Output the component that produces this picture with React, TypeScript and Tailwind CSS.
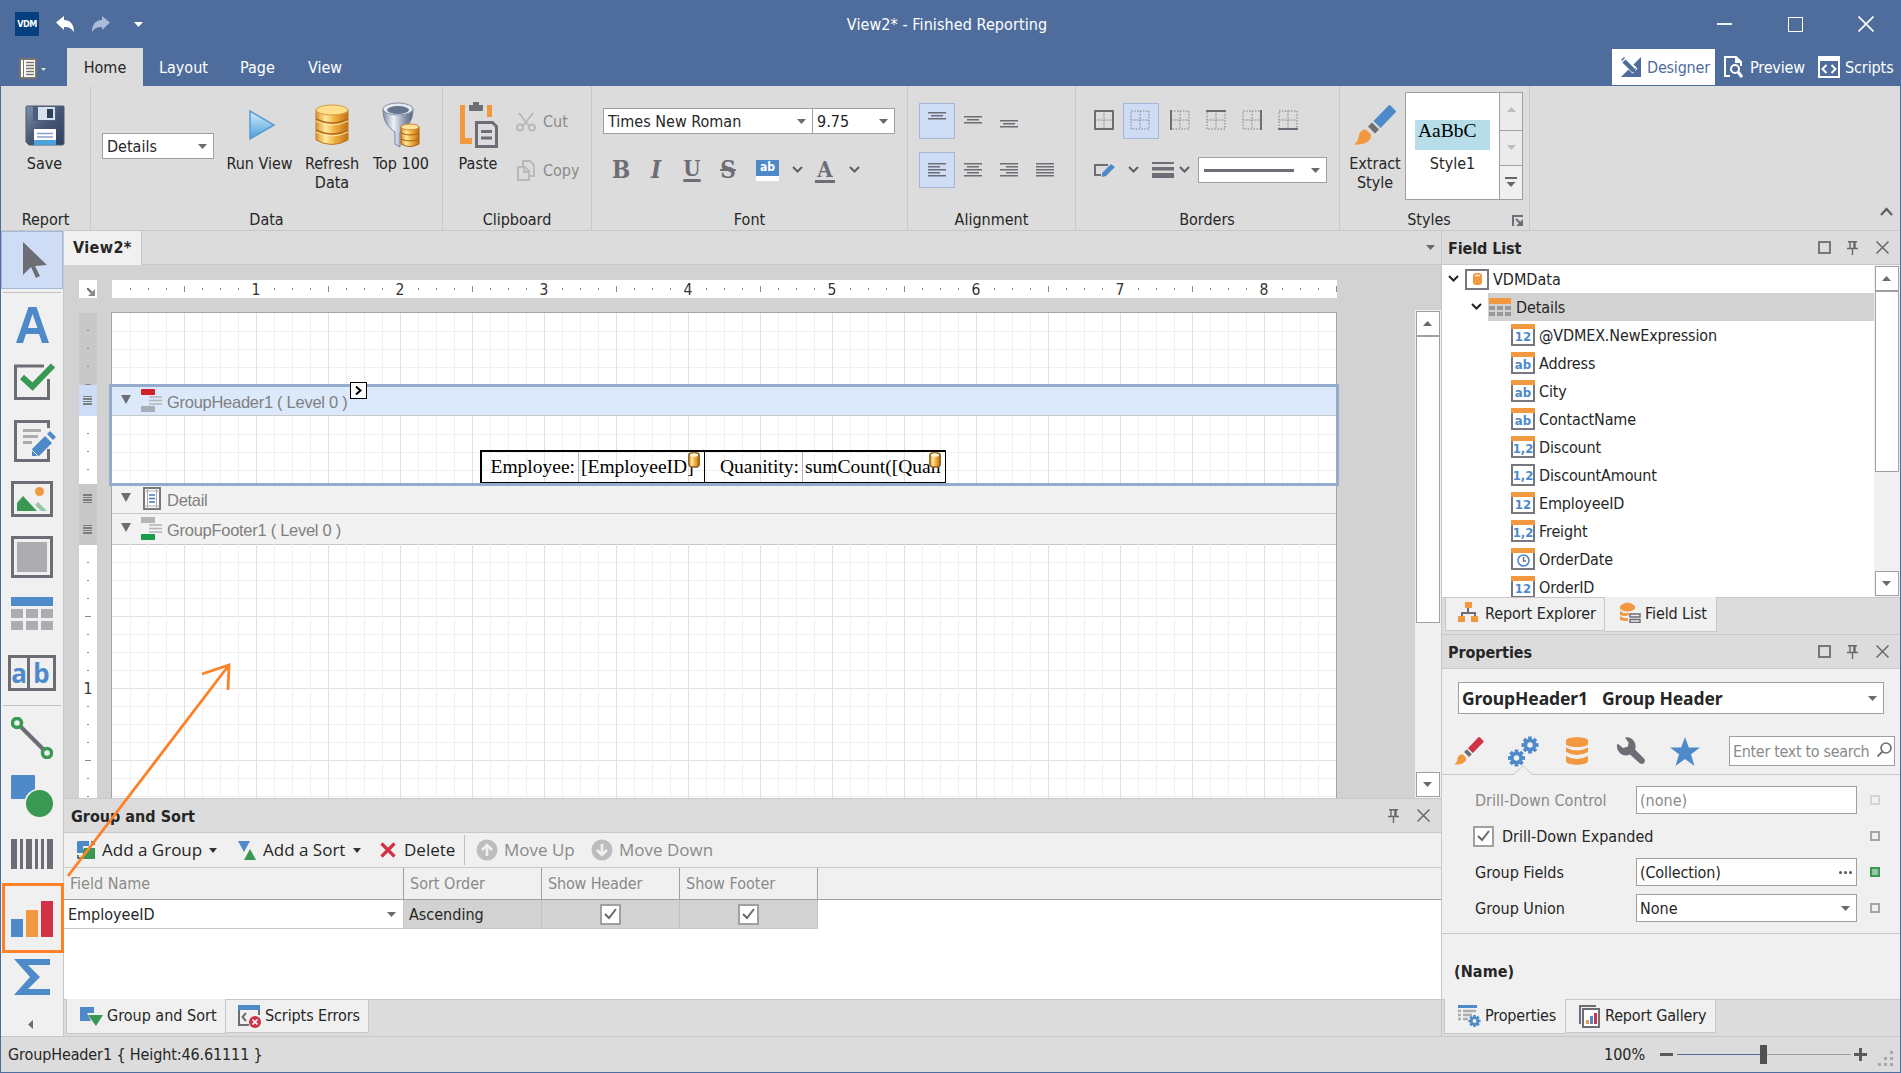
import React from 'react';
import clsx from 'clsx';

const BLUE = '#4e8ac9';
const ORANGE = '#f2983e';
const GREEN = '#399852';
const RED = '#d23245';
const INK = '#6d6d75';
const LIGHT = '#adacb1';

interface SvgProps {
  w: number;
  h: number;
  className?: string;
  children: React.ReactNode;
}

const Svg = ({ w, h, className, children }: SvgProps) => (
  <svg width={w} height={h} viewBox={`0 0 ${w} ${h}`} fill="none" className={clsx('block shrink-0', className)}>
    {children}
  </svg>
);

const Caret = ({ color = '#6a6a6a', className }: { color?: string; className?: string }) => (
  <Svg w={9} h={5} className={className}><path d="M0 0h9L4.500 5z" fill={color} /></Svg>
);

const CaretUp = ({ color = '#6a6a6a' }: { color?: string }) => (
  <Svg w={9} h={5}><path d="M0 5h9L4.500 0z" fill={color} /></Svg>
);

const Chevron = ({ className, color = '#5f5f63' }: { className?: string; color?: string }) => (
  <Svg w={11} h={8} className={className}><path d="M1 1l4.500 4.500L10 1" stroke={color} strokeWidth="2" /></Svg>
);

/* ---------- ribbon icons ---------- */

const SaveIcon = () => (
  <Svg w={40} h={41}>
    <defs>
      <linearGradient id="sv" x1="0" y1="0" x2="1" y2="1">
        <stop offset="0" stopColor="#7f91ad" /><stop offset=".5" stopColor="#465673" /><stop offset="1" stopColor="#2f4160" />
      </linearGradient>
    </defs>
    <path d="M2 1h36q1 0 1 1v36q0 2-2 2H4l-3-3V2q0-1 1-1z" fill="url(#sv)" stroke="#4a5870" />
    <rect x="8" y="1" width="23" height="15" fill="#4d5e7c" />
    <rect x="13" y="2" width="17" height="13" fill="#d9e1ec" />
    <rect x="22" y="4" width="6" height="9" fill="#2f3f5b" />
    <rect x="9" y="24" width="22" height="16" fill="#fff" />
    <rect x="9" y="35" width="22" height="5" fill="#4ba3dc" />
    <path d="M12 28.500h16M12 32h16" stroke="#8ba0c8" strokeWidth="1.500" />
  </Svg>
);

const RunIcon = () => (
  <Svg w={28} h={32}>
    <defs>
      <linearGradient id="rn" x1="0" y1="0" x2="0" y2="1">
        <stop offset="0" stopColor="#d6ecfa" /><stop offset="1" stopColor="#459fdc" />
      </linearGradient>
    </defs>
    <path d="M2 2l24 14L2 30z" fill="url(#rn)" stroke="#5b9bd0" strokeWidth="1.500" />
  </Svg>
);

const GoldDefs = () => (
  <defs>
    <linearGradient id="gold" x1="0" x2="1">
      <stop offset="0" stopColor="#e0952c" /><stop offset=".3" stopColor="#ffe9a0" /><stop offset=".6" stopColor="#f0ae3c" /><stop offset="1" stopColor="#c06f14" />
    </linearGradient>
    <linearGradient id="steel" x1="0" x2="1">
      <stop offset="0" stopColor="#7d8ba1" /><stop offset=".35" stopColor="#eef2f7" /><stop offset=".7" stopColor="#8d9ab0" /><stop offset="1" stopColor="#536280" />
    </linearGradient>
  </defs>
);

const DatabaseIcon = () => (
  <Svg w={36} h={42}>
    <GoldDefs />
    <path d="M2 6v30q16 9 32 0V6z" fill="url(#gold)" stroke="#c07a26" />
    <path d="M2 15q16 8 32 0M2 26q16 8 32 0" stroke="#b5691a" strokeWidth="1.500" />
    <path d="M2 17q16 8 32 0M2 28q16 8 32 0" stroke="#ffe7a6" />
    <ellipse cx="18" cy="6" rx="16" ry="5" fill="#ffdf8d" stroke="#d69a3f" />
  </Svg>
);

const FunnelIcon = () => (
  <Svg w={38} h={46}>
    <GoldDefs />
    <path d="M1 7c0 12 4 17 12 23v12l5 3V30c8-6 13-11 13-23z" fill="url(#steel)" stroke="#77849b" />
    <ellipse cx="16" cy="7" rx="15" ry="6" fill="#e6ebf2" stroke="#8491a6" />
    <ellipse cx="16" cy="8" rx="11" ry="4" fill="#65758f" />
    <path d="M19 25v17q9 5 18 0V25z" fill="url(#gold)" stroke="#a85f15" />
    <path d="M19 31q9 4 18 0M19 37q9 4 18 0" stroke="#a85f15" />
    <ellipse cx="28" cy="25" rx="9" ry="3" fill="#ffe39a" stroke="#c98529" />
  </Svg>
);

const PasteIcon = () => (
  <Svg w={40} h={46}>
    <path d="M6 3H1v39h12v-6H6zM28 3h5v12h-5z" fill={ORANGE} />
    <path d="M10 3h4V0h6v3h4v5q0 1-1 1H11q-1 0-1-1z" fill={INK} />
    <path d="M17.500 20.500h16l4 4v20h-20z" stroke={INK} strokeWidth="3" />
    <path d="M22 29.500h11M22 36h11" stroke={INK} strokeWidth="3" />
  </Svg>
);

const CutIcon = () => (
  <Svg w={20} h={20}>
    <g stroke="#b9b9bb" strokeWidth="2">
      <path d="M3 1l10 13M17 1L7 14" /><circle cx="4" cy="15.500" r="3" /><circle cx="16" cy="15.500" r="3" />
    </g>
  </Svg>
);

const CopyIcon = () => (
  <Svg w={19} h={22}>
    <g stroke="#b9b9bb" strokeWidth="2">
      <path d="M6 6V1h7l4 4v11h-4" /><path d="M1 7h7l4 4v9H1z" /><path d="M7 7v5h5" />
    </g>
  </Svg>
);

const Lines = ({ rows }: { rows: number[][] }) => (
  <Svg w={18} h={18}>
    {rows.map(([x, y, len], i) => <rect key={i} x={x} y={y} width={len} height="1.500" fill={INK} />)}
  </Svg>
);

const V_ALIGN = [
  [[0, 2, 18], [3, 5, 12], [0, 8, 18]],
  [[0, 6, 18], [3, 9, 12], [0, 12, 18]],
  [[0, 10, 18], [3, 13, 12], [0, 16, 18]],
];

const H_ALIGN = [
  [[0, 2, 18], [0, 5, 12], [0, 8, 18], [0, 11, 12], [0, 14, 18]],
  [[0, 2, 18], [3, 5, 12], [0, 8, 18], [3, 11, 12], [0, 14, 18]],
  [[0, 2, 18], [6, 5, 12], [0, 8, 18], [6, 11, 12], [0, 14, 18]],
  [[0, 2, 18], [0, 5, 18], [0, 8, 18], [0, 11, 18], [0, 14, 18]],
];

const BORDER_EDGES = ['M1 1h18v18H1z', '', 'M1 0v20', 'M0 1h20', 'M19 0v20', 'M0 19h20'];

const BorderIcon = ({ edge }: { edge: string }) => (
  <Svg w={20} h={20}>
    <path d="M1 1h18v18H1zM10 1v18M1 10h18" stroke="#8d8d93" strokeWidth="1.500" strokeDasharray="1.500 1.500" opacity=".8" />
    {edge && <path d={edge} stroke={INK} strokeWidth="2" />}
  </Svg>
);

const BrushIcon = ({ w, h, tip }: { w: number; h: number; tip: string }) => (
  <svg width={w} height={h} viewBox="0 0 42 40" className="block shrink-0">
    <path d="M34.500 0.500q1-1 2 0l5 5q1 1 0 2L26.500 23l-7-7z" fill={tip} />
    <path d="M18 17.500l7 7-4 4-7-7z" fill={INK} />
    <path d="M0 39.500c6-4 3-9 7-13 2-2 4-2 5-2l5 5c0 2 0 4-2 6-4 4-9 4-15 4z" fill={ORANGE} />
  </svg>
);

/* ---------- toolbox icons ---------- */

const CheckTool = () => (
  <Svg w={42} h={38}>
    <path d="M30 3H1.500v32.500h33V16" stroke={INK} strokeWidth="3" />
    <path d="M7 14l11 10L38 3" stroke="#f0f0f0" strokeWidth="10" />
    <path d="M8 14l10.500 9.500L39 2.500" stroke={GREEN} strokeWidth="6" />
  </Svg>
);

const RichTextTool = () => (
  <Svg w={42} h={43}>
    <path d="M34.500 8V1.500h-33v39h33V29" stroke={INK} strokeWidth="3" />
    <path d="M9 10.500h18M9 16.500h15M9 22.500h9" stroke={LIGHT} strokeWidth="3" />
    <path d="M18 36v-7l13-13 7 7-13 13z" fill={BLUE} />
    <path d="M33 14l3-3 6 6-3 3z" fill={BLUE} />
    <path d="M18 30l6 6" stroke="#f0f0f0" />
  </Svg>
);

const PictureTool = () => (
  <Svg w={42} h={36}>
    <rect x="1.500" y="1.500" width="39" height="33" stroke={INK} strokeWidth="3" />
    <circle cx="28.500" cy="10.500" r="4.500" fill={ORANGE} />
    <path d="M6 30v-8l6-7 14 15z" fill={GREEN} />
    <path d="M24 24l3-3 9 9h-6z" fill="#98c7a5" />
  </Svg>
);

const TableTool = () => (
  <Svg w={42} h={33}>
    <rect width="42" height="9" fill={BLUE} />
    {[0, 15, 30].map(x => [12, 24].map(y => <rect key={`${x}-${y}`} x={x} y={y} width="12" height="9" fill={LIGHT} />))}
  </Svg>
);

const ShapeTool = () => (
  <Svg w={42} h={43}>
    <path d="M1 0h22q1 0 1 1v13q-8 3-10 10H1q-1 0-1-1V1q0-1 1-1z" fill={BLUE} />
    <circle cx="28.500" cy="28.500" r="13.500" fill={GREEN} />
  </Svg>
);

const LineTool = () => (
  <Svg w={42} h={42}>
    <path d="M9 9l24 24" stroke={INK} strokeWidth="4" />
    <circle cx="6" cy="6" r="4.500" stroke={GREEN} strokeWidth="3.500" />
    <circle cx="36" cy="36" r="4.500" stroke={GREEN} strokeWidth="3.500" />
  </Svg>
);

const BarcodeTool = () => (
  <Svg w={42} h={30}>
    <path d="M0 0h6v30H0zM9 0h3v30H9zM15 0h6v30h-6zM24 0h3v30h-3zM30 0h3v30h-3zM36 0h6v30h-6z" fill={INK} />
  </Svg>
);

const ChartTool = () => (
  <Svg w={42} h={36}>
    <path d="M0 18h12v18H0z" fill={BLUE} /><path d="M15 9h12v27H15z" fill={ORANGE} /><path d="M30 0h12v36H30z" fill={RED} />
  </Svg>
);

const SigmaTool = () => (
  <Svg w={36} h={36}>
    <path d="M0 0h36v6H14l12 12-12 12h22v6H0l16-18z" fill={BLUE} />
  </Svg>
);

/* ---------- small chrome ---------- */

const PinIcon = () => (
  <Svg w={11} h={14}><path d="M1 .8h9M3 1v6M8 1v6M7 1v6M0 7.500h11M5.500 8v6" stroke="#68686c" strokeWidth="1.400" /></Svg>
);

const CloseIcon = () => (
  <Svg w={13} h={13}><path d="M.5.5l12 12M12.500.5l-12 12" stroke="#68686c" strokeWidth="1.500" /></Svg>
);

const PanelTitle = ({ title, max, className }: { title: string; max?: boolean; className?: string }) => (
  <div className={clsx('flex h-[33px] shrink-0 items-center bg-[#dcdcdc] pr-[11px]', className ?? 'pl-1.5')}>
    <span className="pt-0.5 font-bold">{title}</span>
    <div className="ml-auto flex items-center">
      {max && <div className="mr-4 size-[13px] border-2 border-[#77777b]" />}
      <PinIcon />
      <div className="ml-[18px]"><CloseIcon /></div>
    </div>
  </div>
);

const Combo = ({ className, children, caret = true }: { className?: string; children?: React.ReactNode; caret?: boolean }) => (
  <div className={clsx('flex shrink-0 items-center border border-[#a0a0a0] bg-white pl-1', className)}>
    {children}
    {caret && <Caret className="ml-auto mr-1.5" />}
  </div>
);

const Check = () => (
  <div className="flex size-[21px] items-center justify-center border-2 border-[#a0a0a0] bg-white">
    <Svg w={13} h={12}><path d="M1 6l4 4 7-9" stroke="#68686c" strokeWidth="2" /></Svg>
  </div>
);

const ScrollButton = ({ up }: { up?: boolean }) => (
  <div className="flex h-[25px] w-6 shrink-0 items-center justify-center border border-[#a0a0a0] bg-white pr-px">
    {up ? <CaretUp /> : <Caret />}
  </div>
);

/* ---------- ribbon ---------- */

interface GroupProps {
  label: string;
  className: string;
  labelClass?: string;
  children: React.ReactNode;
  extra?: React.ReactNode;
}

const Group = ({ label, className, labelClass, children, extra }: GroupProps) => (
  <div className={clsx('relative flex h-full shrink-0 flex-col border-r border-[#c8c8c8]', className)}>
    <div className="h-[122px] shrink-0">{children}</div>
    <div className={clsx('text-center leading-6', labelClass)}>{label}</div>
    {extra}
  </div>
);

const BigButton = ({ icon, label, className }: { icon: React.ReactNode; label: string; className?: string }) => (
  <div className={clsx('flex shrink-0 flex-col items-center text-center leading-[19px]', className)}>
    <div className="flex h-[68px] items-center pt-2.5">{icon}</div>
    <span className="whitespace-pre">{label}</span>
  </div>
);

const Toggle = ({ on, className, children }: { on?: boolean; className?: string; children: React.ReactNode }) => (
  <div className={clsx('flex size-9 items-center justify-center border', on ? 'border-[#a5b6d6] bg-[#cfdcf5]' : 'border-transparent', className)}>
    {children}
  </div>
);

const glyph = 'font-["DejaVu_Serif"] font-bold leading-none text-[#6d6d75] text-center';

const Ribbon = () => (
  <div className="flex h-[145px] shrink-0 border-b border-[#c8c8c8]">
    <Group label="Report" className="w-[90px]">
      <BigButton className="w-[87px]" icon={<SaveIcon />} label="Save" />
    </Group>
    <Group label="Data" className="w-[352px]">
      <div className="flex">
        <Combo className="ml-[11px] mt-[47px] h-[26px] w-28"><span className="pt-px">Details</span></Combo>
        <BigButton className="ml-[7px] w-[77px]" icon={<div className="pl-1"><RunIcon /></div>} label="Run View" />
        <BigButton className="w-[68px]" icon={<DatabaseIcon />} label={'Refresh\nData'} />
        <BigButton className="w-[70px]" icon={<FunnelIcon />} label="Top 100" />
      </div>
    </Group>
    <Group label="Clipboard" className="w-[149px]">
      <div className="flex">
        <BigButton className="ml-[7px] w-[56px]" icon={<div className="pl-0.5"><PasteIcon /></div>} label="Paste" />
        <div className="ml-2.5 mt-6 flex flex-col gap-[25px] text-[#8a8a8a]">
          <div className="flex h-6 items-center gap-[7px]"><CutIcon />Cut</div>
          <div className="flex h-6 items-center gap-2 pl-px"><CopyIcon /><span className="-ml-px">Copy</span></div>
        </div>
      </div>
    </Group>
    <Group label="Font" className="w-[316px]">
      <div className="flex pl-[11px] pt-[22px]">
        <Combo className="h-[26px] w-[210px]"><span className="pt-px">Times New Roman</span></Combo>
        <Combo className="h-[26px] w-[82px] border-l-0"><span className="pt-px">9.75</span></Combo>
      </div>
      <div className="flex h-[34px] items-center pl-[19px] pt-9">
        <span className={clsx(glyph, 'w-[20px] pb-px text-[24px]')}>B</span>
        <span className={clsx(glyph, 'ml-[15px] w-[20px] pb-px text-[24px] italic')}>I</span>
        <span className={clsx(glyph, 'ml-4 w-[20px] pb-1 text-[22px] underline decoration-[3px] underline-offset-[3px]')}>U</span>
        <span className={clsx(glyph, 'ml-[17px] w-[18px] pb-px text-[24px] line-through decoration-2')}>S</span>
        <div className="ml-[19px] mt-px h-[21px] w-[23px] bg-white">
          <div className="h-4 bg-[#4e8ac9] text-center text-[12px] font-bold leading-[14px] text-white">ab</div>
        </div>
        <Chevron className="ml-[13px]" />
        <span className={clsx(glyph, 'ml-3 w-[20px] border-b-[3px] border-[#6d6d75] text-[22px] leading-[18px]')}>A</span>
        <Chevron className="ml-3.5" />
      </div>
    </Group>
    <Group label="Alignment" className="w-[168px]">
      <div className="flex pl-[11px] pt-[17px]">
        {V_ALIGN.map((rows, i) => <Toggle key={i} on={i === 0}><div className="-mt-1"><Lines rows={rows} /></div></Toggle>)}
      </div>
      <div className="flex pl-[11px] pt-[13px]">
        {H_ALIGN.map((rows, i) => <Toggle key={i} on={i === 0}><Lines rows={rows} /></Toggle>)}
      </div>
    </Group>
    <Group label="Borders" className="w-[264px]" labelClass="pr-px">
      <div className="flex pl-[11px] pt-[17px]">
        {BORDER_EDGES.map((edge, i) => (
          <Toggle key={i} on={i === 1} className={clsx(i === 2 && 'ml-1')}><div className="pb-0.5 pr-0.5"><BorderIcon edge={edge} /></div></Toggle>
        ))}
      </div>
      <div className="flex items-center pl-[18px] pt-[18px]">
        <Svg w={22} h={16}>
          <path d="M14 3H1v10h6" stroke={INK} strokeWidth="2" />
          <path d="M8 11L17 2l4 3-9 9-4 1z" fill={BLUE} />
        </Svg>
        <Chevron className="ml-3" />
        <Svg w={22} h={16} className="ml-[13px]"><path d="M0 0h22v2H0zM0 5h22v3.500H0zM0 11h22v5H0z" fill={INK} /></Svg>
        <Chevron className="ml-[5px]" />
        <Combo className="ml-2 h-[26px] w-[129px]">
          <div className="ml-px h-[3px] w-[90px] bg-[#6d6d75]" />
        </Combo>
      </div>
    </Group>
    <Group
      label="Styles"
      className="w-[190px]"
      labelClass="pr-[11px]"
      extra={
        <Svg w={11} h={11} className="absolute bottom-[4px] right-[6px]">
          <path d="M1 11V1h10" stroke={INK} strokeWidth="2" /><path d="M4 4l5 5" stroke={INK} strokeWidth="2" /><path d="M11 4v7H4z" fill={INK} />
        </Svg>
      }
    >
      <div className="flex">
        <BigButton className="ml-[5px] w-[60px]" icon={<BrushIcon w={42} h={40} tip={BLUE} />} label={'Extract\nStyle'} />
        <div className="mt-1.5 flex h-[108px] w-[118px] border border-[#a0a0a0] bg-white">
          <div className="w-[94px] pl-[9px] pt-[27px]">
            <div className="h-[30px] w-[75px] bg-[#b7dde8] pl-[3px] font-['Liberation_Serif'] text-[19.500px] leading-[22px] text-black">AaBbC</div>
            <div className="w-[75px] text-center leading-[27px]">Style1</div>
          </div>
          <div className="flex w-[23px] flex-col divide-y divide-[#a0a0a0] border-l border-[#a0a0a0] bg-[#ebebeb]">
            <div className="flex flex-1 items-center justify-center pb-1"><CaretUp color="#bdbdbd" /></div>
            <div className="flex flex-1 items-center justify-center"><Caret color="#bdbdbd" /></div>
            <div className="flex flex-1 items-center justify-center bg-[#f0f0f0]">
              <Svg w={12} h={10}><path d="M0 1h12" stroke="#68686c" strokeWidth="2" /><path d="M1.500 5h9L6 10z" fill="#68686c" /></Svg>
            </div>
          </div>
        </div>
      </div>
    </Group>
    <div className="ml-auto flex items-end pb-[14px] pr-[7px]">
      <Svg w={13} h={9}><path d="M1 8l5.500-6L12 8" stroke="#5f5f63" strokeWidth="2.200" /></Svg>
    </div>
  </div>
);

const TitleBar = () => (
  <div className="flex h-12 shrink-0 items-center pl-3.5 pr-[26px] text-white">
    <div className="flex h-6 w-6 items-center justify-center bg-[#04407f] text-[9px] font-bold tracking-[-0.5px]">VDM</div>
    <Svg w={18} h={16} className="ml-[17px]"><path d="M0 6.500L8 0v4c6 0 10 4 10 12-3-4-5-5-10-5v3z" fill="#fff" /></Svg>
    <Svg w={18} h={16} className="ml-[18px]"><path d="M18 6.500L10 0v4C4 4 0 8 0 16c3-4 5-5 10-5v3z" fill="#a9bbd9" /></Svg>
    <Caret color="#fff" className="ml-[24px]" />
    <span className="ml-[702px] w-[204px] whitespace-nowrap pt-px text-center tracking-[0.08px]">View2* - Finished Reporting</span>
    <div className="ml-auto flex items-center">
      <div className="h-0.5 w-[15px] bg-white/90" />
      <div className="ml-[56px] size-[15px] border-[1.500px] border-white" />
      <Svg w={16} h={16} className="ml-[55px]"><path d="M.5.5l15 15M15.500.5l-15 15" stroke="#fff" strokeWidth="1.600" /></Svg>
    </div>
  </div>
);

const TabBar = () => (
  <div className="flex h-[38px] shrink-0 items-center text-white">
    <Svg w={18} h={21} className="ml-[18px] mt-0.5">
      <rect x="1" y="1" width="16" height="19" fill="#fff" stroke="#77746c" strokeWidth="2" />
      <path d="M4.500 1v19" stroke="#77746c" />
      <path d="M7 4.500h8M7 7.500h8M7 10.500h8M7 13.500h8M7 16.500h8" stroke="#77746c" strokeWidth="1.500" />
    </Svg>
    <Svg w={5} h={3} className="ml-1 mt-1"><path d="M0 0h5L2.500 3z" fill="#e8dfcf" /></Svg>
    <div className="ml-[21px] flex h-full w-[76px] items-center justify-center bg-[#dcdcdc] pt-px text-[#262626]">Home</div>
    <span className="ml-4 w-[81px] pt-px">Layout</span>
    <span className="w-[68px] pt-px">Page</span>
    <span className="pt-px">View</span>
    <div className="ml-auto flex h-9 w-[103px] items-center bg-white pl-[9px] text-[#4e6d9c]">
      <Svg w={20} h={20}>
        <path d="M20 0v20H0zM10 14h5V9z" fill="#4e6d9c" fillRule="evenodd" />
        <path d="M2 2l12 12" stroke="#fff" strokeWidth="7" />
        <path d="M3 4l10 10" stroke="#4e6d9c" strokeWidth="4.500" /><path d="M0 3l3-3 1 1-3 3zM10 15l4 0 1-4z" fill="#4e6d9c" />
      </Svg>
      <span className="ml-1.5 pt-px tracking-[-0.2px]">Designer</span>
    </div>
    <Svg w={19} h={22} className="ml-[9px]">
      <path d="M6 20H1V1h11l5 5v4" stroke="#fff" strokeWidth="2" /><path d="M11 0l7 7h-7z" fill="#fff" />
      <circle cx="11" cy="13" r="4" stroke="#fff" strokeWidth="2" /><path d="M14 16l4 5" stroke="#fff" strokeWidth="3" />
    </Svg>
    <span className="ml-[7px] w-[68px] pt-px tracking-[-0.15px]">Preview</span>
    <Svg w={22} h={22}>
      <rect x="1" y="1" width="20" height="20" stroke="#fff" strokeWidth="2" /><path d="M1 1h20v4H1z" fill="#fff" />
      <path d="M8.500 9l-4 4 4 4M13.500 9l4 4-4 4" stroke="#fff" strokeWidth="2" />
    </Svg>
    <span className="ml-[5px] w-[55px] pt-px tracking-[-0.1px]">Scripts</span>
  </div>
);

/* ---------- toolbox ---------- */

const Toolbox = () => (
  <div className="flex w-[63px] shrink-0 flex-col items-start border-r border-[#c8c8c8] bg-[#f0f0f0]">
    <div className="h-[58px] w-[62px] border border-[#a5b6d6] bg-[#cfdcf5] pl-[21px] pt-[10px]">
      <Svg w={24} h={36}><path d="M0 0v33l8-8 5 11 4-2-5-10 12-1z" fill={INK} /></Svg>
    </div>
    <div className="ml-0.5 mt-[3px] h-px w-[58px] bg-[#c0c0c0]" />
    <Svg w={34} h={36} className="ml-[15px] mt-[14px]"><path d="M0 36L12.500 0h8L33 36h-7l-3-9H10l-3 9zM12 21h9.500L16.500 7z" fill={BLUE} /></Svg>
    <div className="ml-[13px] mt-[20px]"><CheckTool /></div>
    <div className="ml-[13px] mt-[19px]"><RichTextTool /></div>
    <div className="ml-[10px] mt-[18px]"><PictureTool /></div>
    <Svg w={42} h={42} className="ml-[10px] mt-[19px]">
      <rect x="1.500" y="1.500" width="39" height="39" stroke={INK} strokeWidth="3" /><rect x="6" y="6" width="30" height="30" fill={LIGHT} />
    </Svg>
    <div className="ml-[10px] mt-[19px]"><TableTool /></div>
    <div className="ml-[7px] mt-[25px] flex h-9 w-12 items-center divide-x-[3px] divide-[#6d6d75] border-[3px] border-[#6d6d75] font-['Noto_Sans'] text-[26px] font-bold text-[#4e8ac9]">
      <span className="w-[19px] text-center leading-[30px]">a</span>
      <span className="w-[23px] text-center leading-[30px]">b</span>
    </div>
    <div className="ml-0.5 mt-[14px] h-px w-[58px] bg-[#c0c0c0]" />
    <div className="ml-[10px] mt-[11px]"><LineTool /></div>
    <div className="ml-[10px] mt-[16px]"><ShapeTool /></div>
    <div className="ml-[10px] mt-[21px]"><BarcodeTool /></div>
    <div className="ml-px mt-[14px] flex h-[70px] w-[62px] shrink-0 items-center justify-center border-[3px] border-[#ff8127] pr-[3px] pt-0.5"><ChartTool /></div>
    <div className="ml-[13px] mt-[6px]"><SigmaTool /></div>
    <Svg w={5} h={9} className="ml-[27px] mt-[25px]"><path d="M5 0v9L0 4.500z" fill={INK} /></Svg>
  </div>
);

/* ---------- report canvas ---------- */

const PAGE_W = 1224;

// Snap grid: a faint line each 1/8 inch, a stronger one each half inch
const Grid = ({ height }: { height: number }) => (
  <svg width={PAGE_W} height={height} className="absolute inset-0" shapeRendering="crispEdges">
    {Array.from({ length: Math.floor((height - 1) / 18) }, (_, i) => i + 1).map(i => (
      <rect key={`h${i}`} x="0" y={i * 18} width={PAGE_W} height="1" fill={i % 4 ? '#f0f0f0' : '#e2e2e2'} />
    ))}
    {Array.from({ length: 67 }, (_, i) => i + 1).map(i => (
      <rect key={`v${i}`} x={i * 18} y="0" width="1" height={height} fill={i % 4 ? '#f0f0f0' : '#e0e0e0'} />
    ))}
  </svg>
);

const HRuler = () => (
  <svg width={PAGE_W + 1} height="18" className="bg-white">
    {Array.from({ length: 68 }, (_, i) => i + 1).map(i =>
      i % 8 === 0 ? (
        <text key={i} x={i * 18} y="14.500" textAnchor="middle" fontSize="15.500" fill="#333">{i / 8}</text>
      ) : (
        <rect key={i} x={i * 18} y={i % 4 ? 8 : 6} width="1" height={i % 4 ? 2 : 6} fill="#8a8a8a" />
      )
    )}
  </svg>
);

const VRuler = ({ height }: { height: number }) => (
  <svg width="18" height={height} className="block">
    {Array.from({ length: Math.floor(height / 18) }, (_, i) => i + 1).map(i =>
      i % 8 === 0 ? (
        <text key={i} x="9" y={i * 18 + 5} textAnchor="middle" fontSize="15.500" fill="#333">{i / 8}</text>
      ) : (
        <rect key={i} x={i % 4 ? 8 : 6} y={i * 18 - 1} width={i % 4 ? 2 : 6} height="1" fill="#8a8a8a" />
      )
    )}
  </svg>
);

const Grip = ({ className }: { className: string }) => (
  <div className={clsx('flex flex-col items-center justify-center gap-px pr-px', className)}>
    {[0, 1, 2, 3].map(i => <div key={i} className="h-[1.500px] w-[9px] bg-[#7d7d80]" />)}
  </div>
);

const BandIcon = ({ top, bottom }: { top: string; bottom: string }) => (
  <Svg w={22} h={23}>
    <rect width="14" height="6" rx="1" fill={top} /><rect y="17" width="14" height="6" rx="1" fill={bottom} />
    <path d="M8 8h13M8 11.500h13M8 15h13" stroke="#b5b5b8" strokeWidth="1.500" />
  </Svg>
);

const DetailIcon = () => (
  <Svg w={18} h={23}>
    <rect x="1" y="1" width="16" height="21" fill="#fff" stroke="#77777b" strokeWidth="2" />
    <path d="M4.500 1v21M13.500 1v21M1 4h16M1 19h16" stroke="#aaa" />
    <path d="M6 8h6M6 11.500h6M6 15h6" stroke="#3d77bd" strokeWidth="1.500" />
  </Svg>
);

const BandHeader = ({ icon, label, className }: { icon: React.ReactNode; label: string; className: string }) => (
  <div className={clsx("flex items-center border-b border-[#c8c8c8] font-['Liberation_Sans'] text-[16.500px] tracking-[-0.28px] text-[#7f7f7f]", className)}>
    <Svg w={10} h={9} className="mb-1"><path d="M0 0h10L5 9z" fill={INK} /></Svg>
    <div className="ml-[7px] flex w-[28px] justify-center pb-0.5">{icon}</div>
    <span className="ml-px whitespace-pre pt-px">{label}</span>
  </div>
);

const MiniDb = () => (
  <Svg w={12} h={16} className="absolute right-[4px] top-0">
    <GoldDefs />
    <rect x=".8" y="1" width="10.400" height="14" rx="3" fill="url(#gold)" stroke="#8a5a1c" strokeWidth="1.400" />
    <ellipse cx="6" cy="3" rx="4" ry="1.800" fill="#fff6d8" />
  </Svg>
);

const Canvas = () => (
  <div className="relative flex h-[533px] shrink-0 overflow-hidden bg-[#d2d2d2] pl-[15px] pt-[15px]">
    <div className="flex w-[33px] shrink-0 flex-col">
      <div className="mb-[15px] flex size-[18px] items-end justify-end bg-white p-[2px]">
        <Svg w={8} h={8}><path d="M0 0l5 5" stroke={INK} strokeWidth="2" /><path d="M8 1v7H1z" fill="#8a8a8e" /></Svg>
      </div>
      <div className="h-[72px] w-[18px] bg-[#c8c8c8]"><VRuler height={72} /></div>
      <Grip className="h-[31px] w-[18px] bg-[#cfdcf5]" />
      <div className="h-[68px] w-[18px] bg-white"><VRuler height={66} /></div>
      <Grip className="h-[30px] w-[18px] bg-[#c8c8c8]" />
      <Grip className="h-[31px] w-[18px] bg-[#c8c8c8]" />
      <div className="h-[254px] w-[18px] bg-white"><VRuler height={253} /></div>
    </div>
    <div className="flex shrink-0 flex-col">
      <HRuler />
      <div className="-ml-px mt-[14px] w-[1226px] border border-b-0 border-[#a5a5a5] bg-white">
        <div className="relative h-[73px]"><Grid height={73} /></div>
        <div className="relative -mx-[3px] -mt-[2px] h-[102px] border-[3px] border-[#93abcc] bg-white">
          <BandHeader className="h-[29px] bg-[#dce9fa] pl-[9px]" icon={<BandIcon top="#cf2028" bottom="#a9adb8" />} label="GroupHeader1 ( Level 0 )" />
          <div className="relative h-[67px]">
            <Grid height={67} />
            {/* label table, placed at 2.56in on the page */}
            <div className="absolute left-[368px] top-[34px] flex h-[33px] w-[466px] border border-l-2 border-t-2 border-black font-['Liberation_Serif'] text-[19.500px] leading-[30px] text-black">
              <div className="w-[97px] border-r border-[#b5b5b5] pr-[3px] text-right">Employee:</div>
              <div className="relative w-[126px] border-r border-black pl-0.5">[EmployeeID]<MiniDb /></div>
              <div className="w-[98px] border-r border-[#b5b5b5] pr-[3px] text-right">Quanitity:</div>
              <div className="relative flex-1 whitespace-nowrap pl-0.5">
                sumCount([Quan
                <MiniDb />
              </div>
            </div>
          </div>
          <div className="absolute left-[238px] top-[-5px] flex size-[17px] items-center justify-center border border-black bg-white">
            <Svg w={7} h={9}><path d="M1 .5l4.500 4L1 8.500" stroke="#000" strokeWidth="2" /></Svg>
          </div>
        </div>
        <BandHeader className="h-7 bg-[#f2f2f2] pl-[9px]" icon={<DetailIcon />} label="Detail" />
        <BandHeader className="h-[31px] bg-[#f2f2f2] pl-[9px]" icon={<BandIcon top="#b5b5b5" bottom="#169d4c" />} label="GroupFooter1 ( Level 0 )" />
        <div className="relative -mt-px h-[254px]"><Grid height={254} /></div>
      </div>
    </div>
    <div className="ml-auto mt-[30px] flex w-[26px] flex-col bg-[#f0f0f0] pl-px pt-px">
      <ScrollButton up />
      <div className="h-[287px] w-6 border border-[#a0a0a0] bg-white" />
      <div className="mt-auto pb-px"><ScrollButton /></div>
    </div>
  </div>
);

/* ---------- group and sort ---------- */

const COLUMNS = [
  { title: 'Field Name', width: 'w-[340px] pl-1.5' },
  { title: 'Sort Order', width: 'w-[138px] pl-1.5' },
  { title: 'Show Header', width: 'w-[138px] pl-1.5 tracking-[-0.15px]' },
  { title: 'Show Footer', width: 'w-[138px] pl-1.5' },
];

const SmallCaret = ({ className }: { className?: string }) => (
  <Svg w={8} h={5} className={className}><path d="M0 0h8L4 5z" fill="#333" /></Svg>
);

const MoveIcon = ({ down }: { down?: boolean }) => (
  <Svg w={22} h={22}>
    <circle cx="11" cy="11" r="10.500" fill="#bdbdbf" />
    <path d={down ? 'M11 5v10M6 11l5 5 5-5' : 'M11 17V7M6 11l5-5 5 5'} stroke="#f0f0f0" strokeWidth="2.600" />
  </Svg>
);

const BottomTab = ({ icon, label, className }: { icon: React.ReactNode; label: string; className: string }) => (
  <div className={clsx('flex shrink-0 items-center whitespace-nowrap border-b border-r border-[#c8c8c8] bg-[#f0f0f0]', className)}>
    {icon}
    <span className="ml-1">{label}</span>
  </div>
);

const GroupAndSort = () => (
  <div className="flex min-h-0 flex-1 flex-col border-t border-[#c8c8c8]">
    <PanelTitle title="Group and Sort" className="pl-[7px]" />
    <div className="flex h-9 shrink-0 items-center border-y border-[#c8c8c8] bg-[#f0f0f0] pl-[13px] font-['Open_Sans'] text-[17px] [font-stretch:normal]">
      <Svg w={18} h={18}>
        <path d="M1 0h11v5H6v7H0V1z" fill={BLUE} /><path d="M7 7h11v11H6V9z" fill={GREEN} />
        <path d="M14 1h3v3M1 14v3h3" stroke={INK} strokeWidth="2" />
      </Svg>
      <span className="ml-[7px] w-[103px] whitespace-nowrap">Add a Group</span>
      <SmallCaret className="ml-1" />
      <Svg w={18} h={19} className="ml-[21px]"><path d="M0 0h12L6 11z" fill={BLUE} /><path d="M12 8l6 11H6z" fill={GREEN} /></Svg>
      <span className="ml-[7px] w-[87px] whitespace-nowrap">Add a Sort</span>
      <SmallCaret className="ml-[3px]" />
      <Svg w={16} h={16} className="ml-[19px]"><path d="M1.500 1.500l13 13M14.500 1.500l-13 13" stroke={RED} strokeWidth="3.200" /></Svg>
      <span className="ml-2 w-[51px]">Delete</span>
      <div className="ml-[9px] h-[30px] w-px bg-[#c0c0c0]" />
      <div className="ml-[11px] flex items-center gap-[6px] whitespace-nowrap text-[#8a8a8a]">
        <MoveIcon /><span className="w-[81px]">Move Up</span>
        <MoveIcon down />Move Down
      </div>
    </div>
    <div className="flex h-8 shrink-0 border-b border-[#a0a0a0] bg-[#f0f0f0] text-[#8a8a8a]">
      {COLUMNS.map(c => (
        <div key={c.title} className={clsx('flex items-center border-r border-[#a0a0a0]', c.width)}>{c.title}</div>
      ))}
    </div>
    <div className="min-h-0 flex-1 bg-white">
      <div className="flex h-[29px] w-[754px] border-b border-[#c8c8c8] bg-[#d2d2d2]">
        <div className="flex w-[340px] items-center border-r border-[#c8c8c8] bg-white pl-1"><span className="pt-px">EmployeeID</span><Caret className="ml-auto mr-[7px]" /></div>
        <div className="flex w-[138px] items-center border-r border-[#c0c0c0] pl-[5px] pt-px">Ascending</div>
        <div className="flex w-[138px] items-center justify-center border-r border-[#c0c0c0]"><Check /></div>
        <div className="flex w-[138px] items-center justify-center border-r border-[#c0c0c0]"><Check /></div>
      </div>
    </div>
    <div className="flex h-[37px] shrink-0 items-start border-t border-[#c8c8c8] pl-0.5">
      <BottomTab
        className="-mt-px h-[35px] w-[160px] border-l pl-[13px]"
        label="Group and Sort"
        icon={<Svg w={23} h={19}><path d="M0 0h14v6H7l4 8H0z" fill={BLUE} /><path d="M8 8h15l-7 11z" fill={GREEN} /></Svg>}
      />
      <BottomTab
        className="h-[33px] w-[143px] pl-[12px] tracking-[-0.1px]"
        label="Scripts Errors"
        icon={
          <Svg w={23} h={23}>
            <path d="M1 3v17h10M21 3v7" stroke={INK} strokeWidth="2" /><path d="M0 0h22v5H0z" fill={BLUE} />
            <path d="M8 8l-3.500 4L8 16" stroke={INK} strokeWidth="2" /><circle cx="17" cy="17" r="6" fill={RED} />
            <path d="M14.500 14.500l5 5M19.500 14.500l-5 5" stroke="#fff" strokeWidth="1.600" />
          </Svg>
        }
      />
    </div>
  </div>
);

/* ---------- field list ---------- */

type FieldKind = 'int' | 'text' | 'num' | 'calc' | 'date';

const FIELDS: { name: string; kind: FieldKind }[] = [
  { name: '@VDMEX.NewExpression', kind: 'int' },
  { name: 'Address', kind: 'text' },
  { name: 'City', kind: 'text' },
  { name: 'ContactName', kind: 'text' },
  { name: 'Discount', kind: 'num' },
  { name: 'DiscountAmount', kind: 'calc' },
  { name: 'EmployeeID', kind: 'int' },
  { name: 'Freight', kind: 'num' },
  { name: 'OrderDate', kind: 'date' },
  { name: 'OrderID', kind: 'int' },
];

const KIND_LABEL: Record<FieldKind, string> = { int: '12', text: 'ab', num: '1,2', calc: '1,2', date: '' };

const FieldIcon = ({ kind }: { kind: FieldKind }) => (
  <div className={clsx('relative flex h-[22px] w-6 shrink-0 items-center justify-center border-2 border-[#77777f] bg-white', kind !== 'calc' && 'border-t-0 pt-1')}>
    {kind !== 'calc' && <div className="absolute -left-0.5 top-0 h-[5px] w-6 bg-[#f2983e]" />}
    {kind === 'date' ? (
      <Svg w={13} h={13}><circle cx="6.500" cy="6.500" r="5.500" stroke={BLUE} strokeWidth="1.600" /><path d="M6.500 3v4H9" stroke={INK} strokeWidth="1.400" /></Svg>
    ) : (
      <span className="text-[13px] font-bold leading-none text-[#4e8ac9]">{KIND_LABEL[kind]}</span>
    )}
  </div>
);

const FieldList = () => (
  <div className="flex h-[403px] shrink-0 flex-col">
    <PanelTitle title="Field List" max className="pl-1.5 tracking-[-0.1px]" />
    <div className="flex h-[333px] shrink-0 border-t border-[#c8c8c8] bg-white">
      <div className="flex-1 overflow-hidden">
        <div className="flex h-7 items-center pl-1.5">
          <Chevron color="#222" />
          <div className="ml-1.5 flex h-[21px] w-6 items-center justify-center border-2 border-[#77777f]">
            <Svg w={9} h={12}><rect width="9" height="12" rx="3" fill={ORANGE} /><ellipse cx="4.500" cy="2.500" rx="3" ry="1" fill="#ffe3c3" /></Svg>
          </div>
          <span className="ml-1 pt-px">VDMData</span>
        </div>
        <div className="flex h-7 items-center pl-[29px]">
          <Chevron color="#222" />
          <div className="ml-1.5 flex h-full flex-1 items-center bg-[#d2d2d2] pl-px">
            <Svg w={22} h={18}>
              <rect width="22" height="6" fill={ORANGE} />
              {[0, 8, 16].map(x => [8, 14].map(y => <rect key={`${x}${y}`} x={x} y={y} width="6" height="4" fill="#98989c" />))}
            </Svg>
            <span className="ml-[5px] pt-px tracking-[-0.1px]">Details</span>
          </div>
        </div>
        {FIELDS.map(f => (
          <div key={f.name} className="flex h-7 items-center pl-[69px]">
            <FieldIcon kind={f.kind} />
            <span className="ml-1 whitespace-nowrap pt-px tracking-[-0.14px]">{f.name}</span>
          </div>
        ))}
      </div>
      <div className="flex w-[26px] flex-col bg-[#f0f0f0] pb-px pl-px pt-px">
        <ScrollButton up />
        <div className="h-[181px] w-6 border border-[#a0a0a0] bg-white" />
        <div className="mt-auto"><ScrollButton /></div>
      </div>
    </div>
    <div className="flex h-[37px] items-start border-t border-[#c8c8c8] pl-[3px]">
      <BottomTab
        className="h-[33px] w-[160px] border-l pl-[12px] tracking-[-0.08px]"
        label="Report Explorer"
        icon={
          <Svg w={21} h={20} className="mb-1 mr-0.5">
            <path d="M10 6v5M4 15v-4h13v4" stroke={INK} strokeWidth="2" />
            <path d="M7 0h7v6H7zM0 14h7v6H0zM13 14h7v6h-7z" fill={ORANGE} />
          </Svg>
        }
      />
      <BottomTab
        className="-mt-px h-[35px] w-[112px] pl-[15px] tracking-[-0.1px]"
        label="Field List"
        icon={
          <Svg w={21} h={21} className="mb-1">
            <path d="M0 4q7.500-7 15 0v3q-7.500 5-15 0zM0 9q4 3 9 2v2q-4 2-9 0zM0 14q4 3 8 2v3q-4 0-8-1z" fill={ORANGE} />
            <path d="M10 12h10v3H10zM10 17.500h10v3H10z" stroke={INK} strokeWidth="1.500" />
          </Svg>
        }
      />
    </div>
  </div>
);

/* ---------- properties ---------- */

const Gear = ({ x, y, r }: { x: number; y: number; r: number }) => (
  <g transform={`translate(${x} ${y})`}>
    {[0, 45, 90, 135].map(a => <rect key={a} x={-r * 0.22} y={-r} width={r * 0.44} height={r * 2} fill={BLUE} transform={`rotate(${a})`} />)}
    <circle r={r * 0.75} fill={BLUE} /><circle r={r * 0.32} fill="#f0f0f0" />
  </g>
);

const Marker = ({ className }: { className?: string }) => (
  <div className={clsx('ml-auto size-[10px] border-2', className ?? 'border-[#a5a5a5]')} />
);

const row = 'flex h-9 items-center pr-5';

const Properties = () => (
  <div className="flex min-h-0 flex-1 flex-col border-t border-[#c8c8c8]">
    <PanelTitle title="Properties" max className="pl-1.5 tracking-[-0.1px]" />
    <div className="flex min-h-0 flex-1 flex-col border-t border-[#c8c8c8] bg-[#f0f0f0]">
      <div className="ml-4 mt-[13px]">
        <Combo className="h-8 w-[426px] font-['Noto_Sans'] text-[17.500px] font-bold tracking-[-0.1px]">
          <span className="-ml-px w-[140px]">GroupHeader1</span>Group Header
        </Combo>
      </div>
      <div className="mt-[22px] flex h-[30px] items-center pl-3">
        <BrushIcon w={30} h={28} tip={RED} />
        <Svg w={31} h={31} className="ml-6"><Gear x={22} y={9} r={8.500} /><Gear x={8.500} y={22} r={8.500} /></Svg>
        <Svg w={22} h={28} className="ml-[27px]">
          <path d="M0 3.500C0-1 22-1 22 3.500V7C22 11 0 11 0 7zM0 10.500q11 6 22 0v4.500q-11 6-22 0zM0 19q11 6 22 0v5c0 5-22 5-22 0z" fill={ORANGE} />
        </Svg>
        <svg width="30" height="30" viewBox="0 0 30 30" className="ml-[28px] block">
          <path d="M9 1.500a9 9 0 0 1 10 12l9.500 9.500q1 2.500-.5 4t-4 .5L14 18.500A9 9 0 0 1 1.500 7.500l5.500 4.500 5-1.500.5-4z" fill={INK} />
        </svg>
        <Svg w={30} h={29} className="ml-[24px]"><path d="M15 0l3.800 10.500H30l-9 6.800L24.500 29 15 22 5.500 29 9 17.300l-9-6.800h11.200z" fill={BLUE} /></Svg>
        <div className="ml-[29px] flex h-[30px] w-[166px] items-center border border-[#a0a0a0] bg-white pl-[3px] text-[#8a8a8a]">
          <span className="w-[144px] whitespace-nowrap pt-px tracking-[-0.33px]">Enter text to search</span>
          <Svg w={15} h={15} className="mb-1"><circle cx="9" cy="6" r="5" stroke={INK} strokeWidth="1.600" /><path d="M5.500 9.500L.5 14.500" stroke={INK} strokeWidth="1.800" /></Svg>
        </div>
      </div>
      <div className="relative mt-2 shrink-0 border-t border-[#c8c8c8] pt-[7px]">
        <Svg w={20} h={11} className="absolute -top-[10px] left-[71px]"><path d="M0 11L10 .8 20 11z" fill="#f0f0f0" /><path d="M0 10L10 .8 20 10" stroke="#c8c8c8" /></Svg>
        <div className={clsx(row, 'text-[#8a8a8a]')}>
          <span className="w-[194px] pl-[33px] pt-px">Drill-Down Control</span>
          <Combo className="h-7 w-[221px]" caret={false}><span className="-ml-px pt-px">(none)</span></Combo>
          <Marker className="border-[#d5d5d5]" />
        </div>
        <div className={row}>
          <div className="ml-[31px] mr-2"><Check /></div>
          <span className="pt-px">Drill-Down Expanded</span>
          <Marker />
        </div>
        <div className={row}>
          <span className="w-[194px] pl-[33px] pt-px">Group Fields</span>
          <Combo className="h-7 w-[221px]" caret={false}>
            <span className="-ml-px pt-px tracking-[-0.15px]">(Collection)</span>
            <div className="ml-auto mr-1 flex gap-0.5">{[0, 1, 2].map(i => <div key={i} className="size-[3px] rounded-full bg-[#555]" />)}</div>
          </Combo>
          <Marker className="border-[#399852] bg-[#98c7a5]" />
        </div>
        <div className={row}>
          <span className="w-[194px] pl-[33px] pt-px">Group Union</span>
          <Combo className="h-7 w-[221px]"><span className="-ml-px pt-px">None</span></Combo>
          <Marker />
        </div>
      </div>
      <div className="mt-[7px] flex-1 border-t border-[#c8c8c8] pl-3 pt-[26px] font-bold tracking-[0.1px]">(Name)</div>
    </div>
    <div className="flex h-[37px] shrink-0 items-start border-t border-[#c8c8c8] pl-[2px]">
      <BottomTab
        className="-mt-px h-[35px] w-[122px] border-l pl-[13px] tracking-[-0.15px]"
        label="Properties"
        icon={
          <Svg w={23} h={22}>
            <rect width="19" height="3" fill={BLUE} />
            <path d="M0 6h3M5 6h13M0 10h3M5 10h9M0 14h3M5 14h5" stroke={LIGHT} strokeWidth="2.500" />
            <Gear x={16.500} y={16} r={6} />
          </Svg>
        }
      />
      <BottomTab
        className="h-[33px] w-[150px] pl-[13px] tracking-[-0.15px]"
        label="Report Gallery"
        icon={
          <Svg w={22} h={23}>
            <path d="M17 1H1v18" stroke={INK} strokeWidth="2" /><rect x="4" y="4" width="16" height="18" fill="#fff" stroke={INK} strokeWidth="2" />
            <path d="M7 15h3v4H7z" fill={ORANGE} /><path d="M11 11h3v8h-3z" fill={BLUE} /><path d="M15 8h3v11h-3z" fill={RED} />
          </Svg>
        }
      />
    </div>
  </div>
);

const StatusBar = () => (
  <div className="flex h-9 shrink-0 items-center border-t border-[#c8c8c8] bg-[#dcdcdc] pl-[7px] pr-[7px]">
    <span className="tracking-[-0.12px]">{'GroupHeader1 { Height:46.61111 }'}</span>
    <div className="ml-auto flex items-center">
      <span className="w-[56px]">100%</span>
      <div className="h-[3px] w-[13px] bg-[#5a5a5c]" />
      <div className="ml-1 h-px w-[83px] bg-[#4e6d9c]" />
      <div className="h-[19px] w-[7px] bg-[#505052]" />
      <div className="h-px w-[84px] bg-[#a0a0a0]" />
      <Svg w={13} h={13} className="ml-[3px]"><path d="M0 6.500h13M6.500 0v13" stroke="#5a5a5c" strokeWidth="3" /></Svg>
      <Svg w={15} h={16} className="ml-[11px] mt-2">
        <path d="M12 0h3v3h-3zM6 6h3v3H6zM12 6h3v3h-3zM0 12h3v3H0zM6 12h3v3H6zM12 12h3v3h-3z" fill="#a8a8aa" />
      </Svg>
    </div>
  </div>
);

export default function App() {
  return (
    <div className="relative flex h-[1073px] w-[1901px] flex-col overflow-hidden border border-t-0 border-[#4e6d9c] bg-[#4e6d9c] font-['DejaVu_Sans_Condensed','DejaVu_Sans',sans-serif] text-[16px] leading-6 text-[#262626] [font-stretch:condensed]">
      <TitleBar />
      <TabBar />
      <div className="flex min-h-0 flex-1 flex-col bg-[#dcdcdc]">
        <Ribbon />
        <div className="flex min-h-0 flex-1">
          <Toolbox />
          <div className="flex w-[1377px] shrink-0 flex-col">
            <div className="flex h-[34px] shrink-0">
              <div className="w-[78px] border-r border-[#c8c8c8] bg-[#f0f0f0] pl-[9px] pt-[5px] font-bold tracking-[0.4px]">View2*</div>
              <div className="flex flex-1 items-center justify-end border-b border-[#c8c8c8] pr-1.5"><Caret /></div>
            </div>
            <Canvas />
            <GroupAndSort />
          </div>
          <div className="flex flex-1 flex-col border-l border-[#c8c8c8]">
            <FieldList />
            <Properties />
          </div>
        </div>
        <StatusBar />
      </div>
      {/* drag hint from the chart tool onto the page */}
      <svg width="170" height="220" className="absolute left-[64px] top-[660px]" fill="none" stroke="#ff8127" strokeWidth="2.800">
        <path d="M3 216L164 5M137 14l27-9-1 25" />
      </svg>
    </div>
  );
}
